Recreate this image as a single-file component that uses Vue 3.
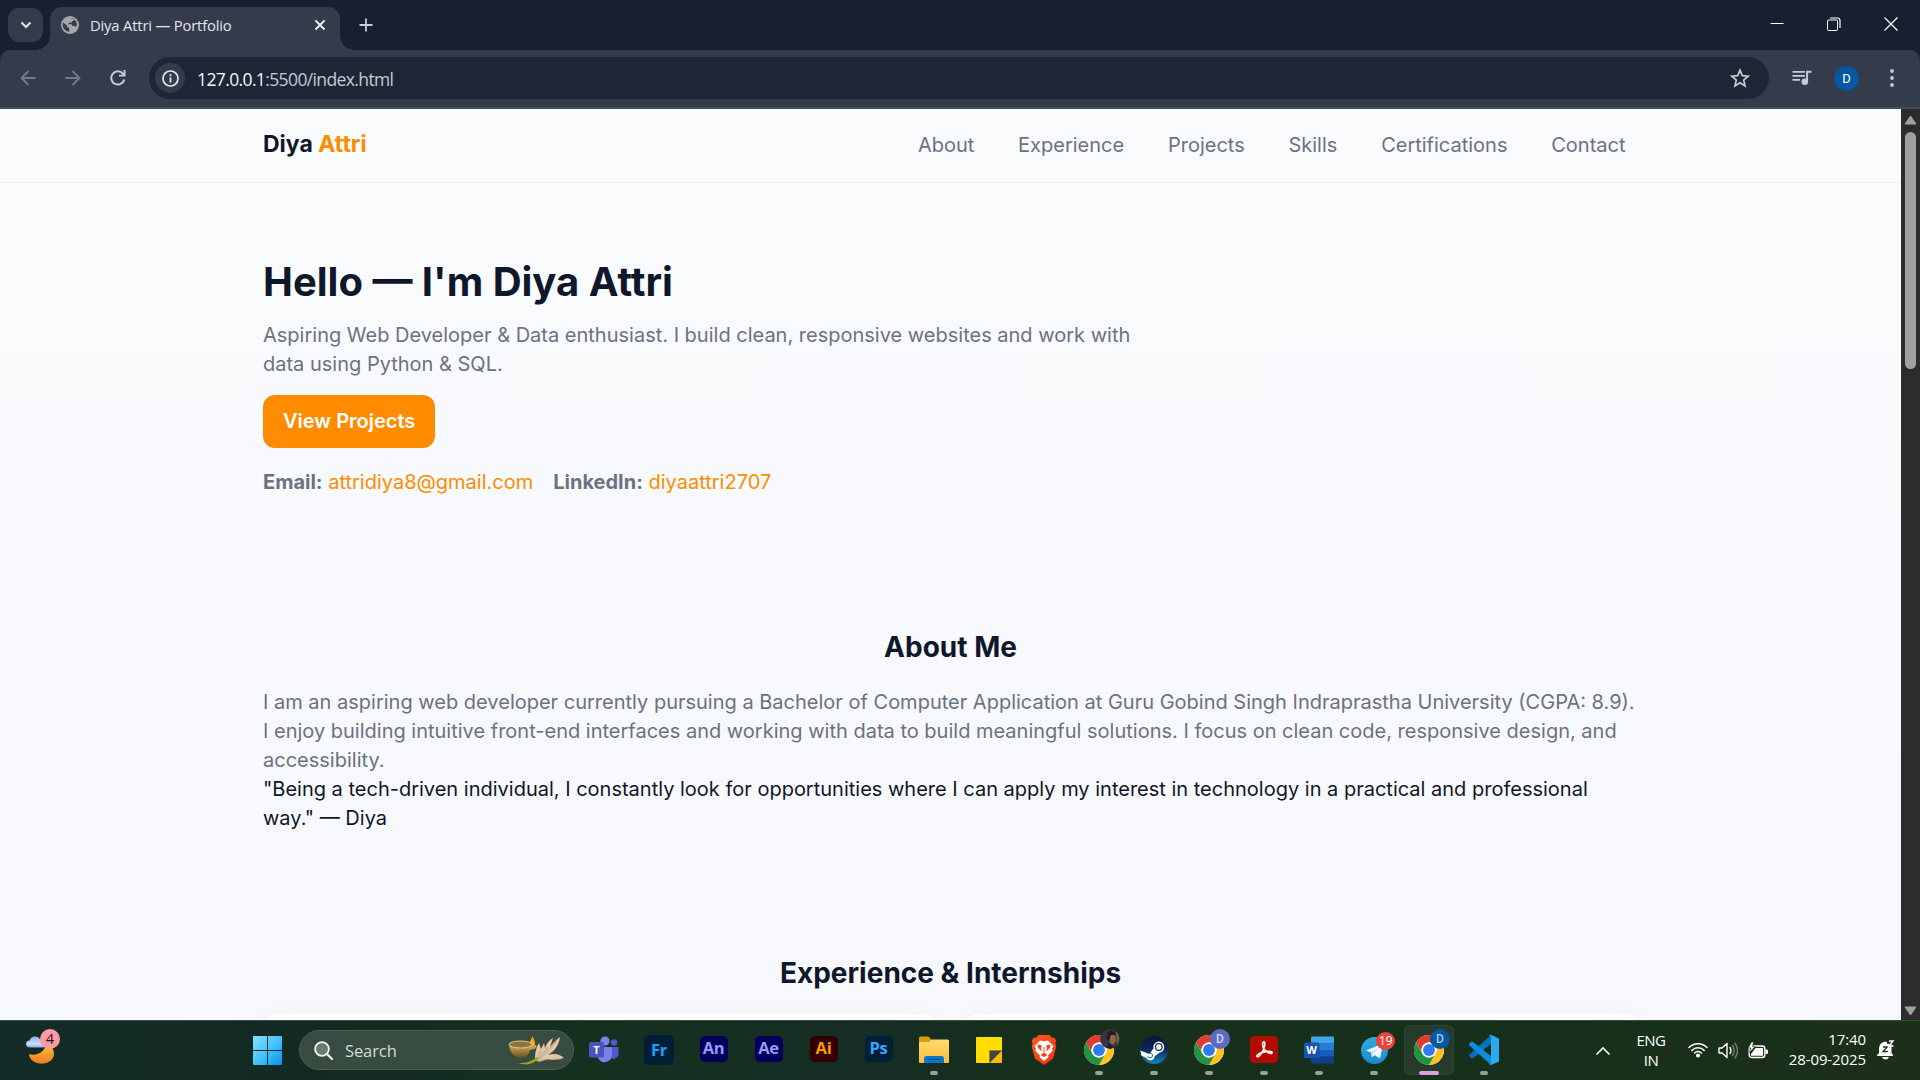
<script setup>
const nav = ['About', 'Experience', 'Projects', 'Skills', 'Certifications', 'Contact']
const adobe = [
  { t: 'Fr', bg: '#001e36', fg: '#14a4ff', big: true },
  { t: 'An', bg: '#00005b', fg: '#9999ff' },
  { t: 'Ae', bg: '#00005b', fg: '#9999ff' },
  { t: 'Ai', bg: '#330000', fg: '#ff9a00' },
  { t: 'Ps', bg: '#001e36', fg: '#31a8ff' },
]
</script>

<template>
  <div class="screen">
    <header class="tabstrip">
      <div class="tabsearch">
        <svg width="12" height="8" viewBox="0 0 12 8"><path d="M1.5 1.5 6 6l4.500-4.500" fill="none" stroke="#e3e5ea" stroke-width="2" /></svg>
      </div>
      <div class="tab">
        <svg class="globe" width="18" height="18" viewBox="0 0 18 18">
          <circle cx="9" cy="9" r="9" fill="#a4a8ad" />
          <path d="M2 6.500 6 9.500v1.200l2.200 1.200v3.800A7 7 0 0 1 2 6.500zM8.500 2.200h3.200L13 3v1.500l-2 .8-.5 1.500H8L7 8.300h3.700l1 1.700h1.700l1.500 1 .9-2A7 7 0 0 0 12 2.700L9 2z" fill="#343b4b" />
        </svg>
        <span class="tabtitle">Diya Attri — Portfolio</span>
        <svg class="close" width="12" height="12" viewBox="0 0 12 12"><path d="M1.500 1.500l9 9M10.500 1.500l-9 9" stroke="#eceef2" stroke-width="1.900" /></svg>
      </div>
      <svg class="plus" width="14" height="14" viewBox="0 0 14 14"><path d="M7 .5v13M.5 7h13" stroke="#c9cfe0" stroke-width="1.800" /></svg>
      <div class="winbtns">
        <svg width="14" height="14" viewBox="0 0 14 14"><path d="M.5 6.500h13" stroke="#fff" stroke-width="1" /></svg>
        <svg width="14" height="14" viewBox="0 0 14 14" fill="none" stroke="#fff"><rect x=".5" y="3" width="10" height="10.500" rx="1" /><path d="M3 1h7.500q2.500 0 2.500 2.500V11" stroke-width="1.200" /></svg>
        <svg width="14" height="14" viewBox="0 0 14 14"><path d="M.5 .5l13 13M13.500 .5l-13 13" stroke="#fff" stroke-width="1.200" /></svg>
      </div>
    </header>

    <div class="toolbar">
      <div class="navbtns">
        <svg width="16" height="16" viewBox="0 0 16 16" fill="none" stroke="#757c8c" stroke-width="1.800"><path d="M15.500 8H2M8.500 1 1.500 8l7 7" /></svg>
        <svg width="16" height="16" viewBox="0 0 16 16" fill="none" stroke="#757c8c" stroke-width="1.800"><path d="M.5 8H14M7.500 1l7 7-7 7" /></svg>
        <svg width="16" height="16" viewBox="0 0 16 16"><path d="M14.300 9.500A6.600 6.600 0 1 1 13 3.800L14.500 5.300" fill="none" stroke="#c3cbe2" stroke-width="2" /><path d="M15.500 0v6.500H9V4.700h4.500V0z" fill="#c3cbe2" /></svg>
      </div>
      <div class="omnibox">
        <div class="info">
          <svg width="17" height="17" viewBox="0 0 17 17"><circle cx="8.500" cy="8.500" r="7.500" fill="none" stroke="#e3e6ef" stroke-width="1.700" /><path d="M8.500 7.500v5M8.500 4.300v1.900" stroke="#e3e6ef" stroke-width="1.800" /></svg>
        </div>
        <span class="url"><b>127.0.0.1</b>:5500/index.html</span>
        <svg class="star" width="20" height="20" viewBox="0 0 20 20"><path d="M10 2.200l2.300 5.500 5.900.5-4.500 3.900 1.400 5.800-5.100-3.100-5.100 3.100 1.400-5.800L1.800 8.200l5.900-.5z" fill="none" stroke="#c9cbd2" stroke-width="1.700" /></svg>
      </div>
      <svg class="media" width="20" height="16" viewBox="0 0 20 16"><path d="M.5 1.800h12.500M.5 5.800h12.500M.5 9.800h7.500" stroke="#c3cbe2" stroke-width="1.800" /><circle cx="12.800" cy="11.700" r="3.300" fill="#c3cbe2" /><path d="M15.100 12V1.700h4.400" fill="none" stroke="#c3cbe2" stroke-width="2" /></svg>
      <div class="avatar">D</div>
      <svg class="dots" width="4" height="18" viewBox="0 0 4 18" fill="#c3cbe2"><circle cx="2" cy="2" r="1.900" /><circle cx="2" cy="9" r="1.900" /><circle cx="2" cy="16" r="1.900" /></svg>
    </div>

    <div class="view">
      <main class="page">
        <div class="sitehead">
          <div class="logo">Diya <span>Attri</span></div>
          <nav><a v-for="n in nav" :key="n">{{ n }}</a></nav>
        </div>
        <section class="hero">
          <h1>Hello — I'm Diya Attri</h1>
          <p class="lead">Aspiring Web Developer &amp; Data enthusiast. I build clean, responsive websites and work with data using Python &amp; SQL.</p>
          <a class="btn">View Projects</a>
          <div class="contacts">
            <div><b>Email:</b> <a>attridiya8@gmail.com</a></div>
            <div><b>LinkedIn:</b> <a>diyaattri2707</a></div>
          </div>
        </section>
        <section class="about">
          <h2>About Me</h2>
          <p class="muted">I am an aspiring web developer currently pursuing a Bachelor of Computer Application at Guru Gobind Singh Indraprastha University (CGPA: 8.9). I enjoy building intuitive front-end interfaces and working with data to build meaningful solutions. I focus on clean code, responsive design, and accessibility.</p>
          <p>"Being a tech-driven individual, I constantly look for opportunities where I can apply my interest in technology in a practical and professional way." — Diya</p>
        </section>
        <section class="exp">
          <h2>Experience &amp; Internships</h2>
          <div class="cards"><article></article><article></article></div>
        </section>
      </main>
      <div class="scrollbar">
        <svg width="13" height="10" viewBox="0 0 13 10"><path d="M6.500 1 12 9H1z" fill="#a0a0a0" stroke="#a0a0a0" stroke-linejoin="round" /></svg>
        <div class="thumb"></div>
        <svg class="down" width="13" height="10" viewBox="0 0 13 10"><path d="M6.500 9 12 1H1z" fill="#a0a0a0" stroke="#a0a0a0" stroke-linejoin="round" /></svg>
      </div>
    </div>

    <footer class="taskbar">
      <svg width="0" height="0" class="defs">
        <defs>
          <linearGradient id="win" x1="0" y1="0" x2="1" y2="1"><stop offset="0" stop-color="#8be0ff" /><stop offset=".5" stop-color="#45c5fb" /><stop offset="1" stop-color="#0a8ff5" /></linearGradient>
          <linearGradient id="moon" x1="0" y1="0" x2="0" y2="1"><stop offset="0" stop-color="#fcc332" /><stop offset="1" stop-color="#ee7a22" /></linearGradient>
          <linearGradient id="cloud" x1="0" y1="0" x2="0" y2="1"><stop offset="0" stop-color="#8db1ee" /><stop offset=".7" stop-color="#cfdcf8" /><stop offset="1" stop-color="#86a6e6" /></linearGradient>
          <linearGradient id="folder" x1="0" y1="0" x2="0" y2="1"><stop offset="0" stop-color="#ffdc70" /><stop offset="1" stop-color="#fdbd38" /></linearGradient>
          <linearGradient id="steam" x1="0" y1="0" x2="0" y2="1"><stop offset="0" stop-color="#141233" /><stop offset=".5" stop-color="#0d2a5c" /><stop offset="1" stop-color="#1486bf" /></linearGradient>
          <linearGradient id="brave" x1="0" y1="0" x2="1" y2="1"><stop offset="0" stop-color="#ff5a1f" /><stop offset="1" stop-color="#fb2d0a" /></linearGradient>
          <linearGradient id="tg" x1="0" y1="0" x2="0" y2="1"><stop offset="0" stop-color="#2fa9e2" /><stop offset="1" stop-color="#1a8bcb" /></linearGradient>
          <linearGradient id="bowl" x1="0" y1="0" x2="0" y2="1"><stop offset="0" stop-color="#d6b768" /><stop offset="1" stop-color="#6c4a15" /></linearGradient>
          <symbol id="chrome" viewBox="0 0 48 48">
            <circle cx="24" cy="24" r="24" fill="#fff" />
            <path d="M24 12h20.800A24 24 0 0 0 3.200 12l10.400 18A12 12 0 0 1 24 12z" fill="#e33b2e" />
            <path d="M34.400 30 24 48A24 24 0 0 0 44.800 12H24a12 12 0 0 1 10.400 18z" fill="#fcc31e" />
            <path d="M13.600 30 3.200 12A24 24 0 0 0 24 48l10.400-18a12 12 0 0 1-20.800 0z" fill="#229342" />
            <circle cx="24" cy="24" r="12" fill="#fff" /><circle cx="24" cy="24" r="9.500" fill="#2f7bee" />
          </symbol>
        </defs>
      </svg>

      <div class="weather">
        <svg width="29" height="29" viewBox="0 0 29 29"><path d="M3 19c6 2 15 0 17-10 5 1 8 5 8 9.500A12.500 10 0 0 1 3 19z" fill="url(#moon)" /><path d="M3.500 12.500a3.500 3.500 0 0 1 .3-7A5.500 5 0 0 1 14 4a4 4 0 0 1 4 8.500z" fill="url(#cloud)" /></svg>
        <span>4</span>
      </div>

      <svg class="start" width="29" height="29" viewBox="0 0 29 29" fill="url(#win)"><path d="M0 1q0-1 1-1h13v14H0zM15 0h13q1 0 1 1v13H15zM0 15h14v14H1q-1 0-1-1zM15 15h14v13q0 1-1 1H15z" /></svg>

      <div class="search">
        <svg class="mag" width="19" height="19" viewBox="0 0 19 19"><circle cx="8" cy="8" r="6.900" fill="#6a7b72" stroke="#f1f4f2" stroke-width="1.800" /><path d="M13 13l5 5" stroke="#f1f4f2" stroke-width="2.300" stroke-linecap="round" /></svg>
        <span>Search</span>
        <svg class="diya" width="56" height="32" viewBox="0 0 56 32">
          <path d="M22 13c-3-4 2-6 2-11 3 4 4 8 2 11z" fill="#ffa50c" />
          <path d="M1 10h24l4 2-2 3-5 1c-1 5-5 8-9 8C6 24 1 17 1 10z" fill="url(#bowl)" />
          <ellipse cx="12.500" cy="10.500" rx="11.500" ry="3.500" fill="#92713a" stroke="#e0cb8b" />
          <path d="M27 25c0-8 2-13 4-16l2 6 3-6 1 5c2-5 4-8 8-10l-3 9c3-4 6-7 10-10-1 7-4 12-8 15l-4 3c6-2 12-1 16 3-4 1-8 2-12 2l-4-1-6 2c-3 1-5 1-7-2z" fill="#dfc7a8" />
          <path d="M28 26l5-9M29 27l11-14M30 27l19-20M33 26l20-1" stroke="#b18a6a" stroke-width=".7" />
          <path d="M10 29c8 0 13-1 19-6l2 1c-5 6-12 8-21 5z" fill="#98a522" />
        </svg>
      </div>

      <div class="apps">
        <div class="app">
          <svg width="30" height="28" viewBox="0 0 30 28"><circle cx="25" cy="6.500" r="3.200" fill="#5059c9" /><path d="M20 11h9.500v7a5 5 0 0 1-7 4.500z" fill="#5059c9" /><circle cx="16" cy="5" r="4.600" fill="#7b83eb" /><path d="M9 11h14v8a7.500 8 0 0 1-14 3z" fill="#7b83eb" /><rect y="6" width="15" height="15.500" rx="1.500" fill="#4b53bc" /></svg>
          <em class="tlet">T</em>
        </div>
        <div v-for="a in adobe" :key="a.t" class="app">
          <div class="adobe" :class="{ big: a.big }" :style="{ background: a.bg, color: a.fg }">{{ a.t }}</div>
        </div>
        <div class="app run">
          <svg width="30" height="28" viewBox="0 0 30 28"><path d="M0 2q0-1.500 1.500-1.500h8L12.500 4v5H0z" fill="#dc9a08" /><path d="M0 6h10l2.500-2.500H28.500Q30 3.500 30 5v21q0 1-1 1H1q-1 0-1-1z" fill="url(#folder)" /><path d="M5 27v-4.500Q5 20 7.500 20h15q2.500 0 2.500 2.500V27z" fill="#0878cf" /><path d="M8 23.300h13.500" stroke="#074a8c" stroke-width="1.200" /></svg>
        </div>
        <div class="app">
          <svg width="26" height="26" viewBox="0 0 26 26"><path d="M0 1q0-1 1-1h24q1 0 1 1v13L14 26H1q-1 0-1-1z" fill="#ffdf00" /><path d="M13 13h13v12q0 1-1 1H13z" fill="#f7b90a" /><path d="M13.500 13.500H26L13.500 26z" fill="#434343" /></svg>
        </div>
        <div class="app">
          <svg width="26" height="30" viewBox="0 0 26 30"><path d="M7.500 0h11L21 2.800l2-.3 2.300 3.300-.9 2.400.9 3-3.200 12.300L13 30l-9.100-6.500L.7 11.200l.9-3-.9-2.400L3 2.500l2 .3z" fill="url(#brave)" /><path d="M9 5.500l4 .8 4-.8 5.500 5.800-1.500 2.500.7 2-4.700 4.700.5 1.700L13 26l-4.500-3.800.5-1.700-4.700-4.700.7-2-1.500-2.500z" fill="#fff" /><path d="M6.500 9.500l4.500 1-1 3 1 3-4-3.500zM19.500 9.500l-4.500 1 1 3-1 3 4-3.500zM9.500 20l3.500-2.500 3.500 2.500-3.500 2z" fill="#fb3f18" /><path d="M13 12v5" stroke="#fb3f18" /></svg>
        </div>
        <div class="app run">
          <svg width="30" height="30"><use href="#chrome" /></svg>
          <svg class="badge face" width="20" height="20" viewBox="0 0 20 20"><circle cx="10" cy="10" r="10" fill="#343646" /><path d="M9 4q4-2 6 2l1 6-3 4-3-2-1-5z" fill="#946248" /><path d="M8 3q5-4 8 3l-5 0-2 6-3-3zM6 19l3-5 3 3 2-1-2 4z" fill="#241c20" /><path d="M16 2q6 6 1 14z" fill="#79634c" /></svg>
        </div>
        <div class="app run">
          <svg width="28" height="28" viewBox="0 0 28 28"><circle cx="14" cy="14" r="14" fill="url(#steam)" /><path d="M.3 14.500l9 3.500 4.200-5.500a5.500 5.500 0 1 1 6.300 4L14.500 20.500a4.200 4.200 0 0 1-8 1.500l-5-2.200z" fill="#fff" /><circle cx="18.800" cy="11" r="3.300" fill="#fff" stroke="#123568" stroke-width="1.300" /><path d="M7.500 20.800l2 .8a2.300 2.300 0 0 0 1.800-4.200l-1.500-.6" fill="none" stroke="#174b82" /></svg>
        </div>
        <div class="app run">
          <svg width="30" height="30"><use href="#chrome" /></svg>
          <span class="badge violet">D</span>
        </div>
        <div class="app run">
          <svg class="pdf" width="28" height="27" viewBox="0 0 28 27"><rect width="28" height="27" rx="4.500" fill="#b30b00" /><path d="M13 6.500c1.600-2 2.400 1 1.200 5C12.800 16 9.500 21 7.500 20.800c-2.300-.6 1.500-4.300 8-5.200 4.500-.6 7 .2 6.500 1.400-1 1.500-5.500-.8-7.500-3.500-1.700-2.500-2.200-5.800-1.500-7z" fill="none" stroke="#fff" stroke-width="1.600" /></svg>
        </div>
        <div class="app run">
          <svg width="30" height="28" viewBox="0 0 30 28"><path d="M7 1.500Q7 .5 8 .5h21q1 0 1 1v6H7z" fill="#41a5ee" /><path d="M7 7.300h23V14H7z" fill="#2b7cd3" /><path d="M7 14h23v6.700H7z" fill="#185abd" /><path d="M7 20.700h23v5.800q0 1-1 1H8q-1 0-1-1z" fill="#103f91" /><rect y="6.500" width="15.500" height="15.500" rx="1.500" fill="#1853b5" /></svg>
          <em class="wlet">W</em>
        </div>
        <div class="app run">
          <svg class="tele" width="27" height="27" viewBox="0 0 27 27"><circle cx="13.500" cy="13.500" r="13.500" fill="url(#tg)" /><path d="M5 13.500 20.500 7.300q1.400-.5 1.200 1L19.300 20q-.4 1.500-1.700.8l-3.900-2.900-2 1.900q-.8.700-1-.6l-.7-4z" fill="#fff" /><path d="M10 15.200l8.500-5.300-6.700 6.500-.3 2.800z" fill="#b9d8ec" /></svg>
          <span class="badge red">19</span>
        </div>
        <div class="app run active">
          <svg width="30" height="30"><use href="#chrome" /></svg>
          <span class="badge blue">D</span>
        </div>
        <div class="app run">
          <svg width="30" height="30" viewBox="0 0 30 30"><path d="M22 0v9L4 23q-1 .8-2 0l-1.500-1.500q-1-1 0-2z" fill="#0073bd" /><path d="M22 30v-9L4 7q-1-.8-2 0L.5 8.500q-1 1 0 2z" fill="#0d8ddb" /><path d="M22 0l7 3q1 .5 1 1.500v21q0 1-1 1.500l-7 3q-1 .2-2-.8 2 .5 2-1.500V2.500q0-2-2-1.500 1-1.200 2-1z" fill="#2ba9f4" /></svg>
        </div>
      </div>

      <div class="tray">
        <svg class="chev" width="14" height="9" viewBox="0 0 14 9"><path d="M1 8l6-6 6 6" fill="none" stroke="#fff" stroke-width="1.700" stroke-linecap="round" /></svg>
        <div class="lang"><span>ENG</span><span>IN</span></div>
        <svg class="wifi" width="20" height="16" viewBox="0 0 20 16" fill="none" stroke="#fff" stroke-width="1.500" stroke-linecap="round"><path d="M1 5.500a12.500 12.500 0 0 1 18 0M3.800 8.400a8.600 8.600 0 0 1 12.400 0M6.600 11a4.800 4.800 0 0 1 6.800 0" /><circle cx="10" cy="13.500" r="1.300" fill="#fff" /></svg>
        <svg class="vol" width="20" height="17" viewBox="0 0 20 17" fill="none" stroke="#fff" stroke-width="1.400" stroke-linecap="round" stroke-linejoin="round"><path d="M1 6h3l5-4.500v14L4 11H1zM12 5.500q2 3 0 6" /><path d="M14.500 3.500q3.500 5 0 10M17 1.200q5 7.300 0 14.600" stroke="#6f8070" /></svg>
        <svg class="bat" width="20" height="17" viewBox="0 0 20 17"><rect x="1.200" y="4" width="15.600" height="11.500" rx="2.500" fill="#1c2f19" stroke="#fff" stroke-width="1.400" /><path d="M3 13.800V12l4.500-6H15v7.800zM17.500 7.500h1q1.500 0 1.500 1.200v2q0 1.300-1.500 1.300h-1z" fill="#fff" /><path d="M3.500 0 .3 6h2.500L1.500 10.500 7 4.500H4.500L5.500 0z" fill="#fff" stroke="#1c2f19" stroke-width=".6" /></svg>
        <div class="clock"><span>17:40</span><span>28-09-2025</span></div>
        <svg class="bell" width="18" height="20" viewBox="0 0 18 20"><path d="M2 13V8a6.500 6.500 0 0 1 8-6v2h4.500v9l1.500 2v1H0v-1zM5 17h7q-1 2.500-3.500 2.500T5 17z" fill="#fff" /><path d="M6 7h4.200L6 11.500h4.800" fill="none" stroke="#1c2f19" stroke-width="1.300" /><path d="M12 1h4l-4 5h4.500" fill="none" stroke="#fff" stroke-width="1.400" /></svg>
      </div>
    </footer>
  </div>
</template>

<style>
body { margin: 0; overflow: hidden; }
</style>

<style scoped>
* { box-sizing: border-box; }
svg { display: block; flex: none; }
.screen { width: 1920px; height: 1080px; display: flex; flex-direction: column; overflow: hidden; font-family: "Open Sans", "Noto Sans", sans-serif; background: #182030; }

.tabstrip { height: 50px; flex: none; display: flex; align-items: flex-start; background: #182030; }
.tabsearch { width: 35px; height: 34px; margin: 8px 7px 0 8px; border-radius: 11px; background: #343b4b; display: flex; align-items: center; justify-content: center; }
.tab { position: relative; width: 290px; height: 43px; margin-top: 7px; border-radius: 12px 12px 0 0; background: #343b4b; display: flex; align-items: center; padding: 0 14px 7px 11px; }
.tab::before, .tab::after { content: ""; position: absolute; bottom: 0; width: 14px; height: 14px; }
.tab::before { left: -14px; background: radial-gradient(circle at 0 0, transparent 13.500px, #343b4b 14px); }
.tab::after { right: -14px; background: radial-gradient(circle at 100% 0, transparent 13.500px, #343b4b 14px); }
.tabtitle { margin-left: 11px; font-size: 14.800px; letter-spacing: -0.180px; color: #e3e5e9; white-space: nowrap; }
.close { margin-left: auto; }
.plus { margin: 18px 0 0 19px; }
.winbtns { margin: 17px 22px 0 auto; display: flex; gap: 43px; }

.toolbar { height: 59px; flex: none; display: flex; align-items: center; background: #343b4b; border-bottom: 2px solid #474c57; padding: 0 0 1px; border-radius: 10px 10px 0 0; }
.navbtns { display: flex; gap: 29px; margin-left: 20px; }
.omnibox { width: 1620px; height: 42px; margin-left: 23px; border-radius: 21px; background: #1e2636; display: flex; align-items: center; padding: 0 19px 0 6px; }
.info { width: 30px; height: 30px; border-radius: 50%; background: #343b4b; display: flex; align-items: center; justify-content: center; }
.url { margin-left: 12px; padding-top: 1px; font-size: 17.500px; letter-spacing: -0.620px; color: #c6cad3; }
.url b { font-weight: 400; color: #f4f5f7; }
.star { margin-left: auto; }
.media { margin-left: 23px; }
.avatar { width: 25px; height: 25px; margin-left: 22px; border-radius: 50%; background: #0558a0; color: #fff; font: 400 13px/25px Roboto, sans-serif; text-align: center; }
.dots { margin-left: 31px; }

.view { height: 911px; flex: none; display: flex; overflow: hidden; background: #fafbfd; }
.page { width: 1901px; height: 911px; overflow: hidden; background: linear-gradient(180deg, #fafbfd, #f7f8fc); color: #0f172a; font-family: Inter, sans-serif; font-size: 20px; line-height: 29px; }
.sitehead { height: 74px; padding: 0 263px; border-bottom: 1px solid #eeeff2; display: flex; align-items: center; justify-content: space-between; }
.logo { font-weight: 700; font-size: 23px; padding-bottom: 2px; }
.logo span { color: #ff8c00; }
nav { display: flex; gap: 18.750px; color: #6b7280; }
nav a { padding: 0 12.500px; }
.hero { height: 392px; padding: 74px 263px 0; display: flex; flex-direction: column; align-items: flex-start; }
h1 { margin: 0; font-size: 40px; line-height: 49px; font-weight: 700; }
.lead { margin: 15px 0 0; width: 900px; color: #6b7280; }
.btn { height: 53px; margin-top: 16px; padding: 0 20px; border-radius: 12px; background: #ff8c00; color: #fff; font-weight: 600; line-height: 52px; }
.contacts { margin-top: 20px; display: flex; gap: 20px; color: #6b7280; }
.contacts b { font-weight: 700; }
.contacts a { color: #ff8c00; }
.about { height: 326px; padding: 52px 263px 0; }
h2 { margin: 0; font-size: 28px; line-height: 40px; font-weight: 700; text-align: center; }
p { margin: 0; }
.about h2 { margin-bottom: 21px; }
.muted { color: #6b7280; }
.exp { padding: 52px 263px 0; }
.cards { margin-top: 21px; display: grid; grid-template-columns: 1fr 1fr; gap: 25px; }
article { height: 200px; border-radius: 15px; background: #fff; box-shadow: 0 8px 30px rgba(15, 23, 42, 0.05); }

.scrollbar { width: 19px; height: 911px; background: #2c2c2c; display: flex; flex-direction: column; align-items: center; padding: 6px 0 4px; }
.thumb { width: 11px; height: 237px; margin-top: 7px; border-radius: 6px; background: #9f9f9f; }
.down { margin-top: auto; }

.taskbar { position: relative; height: 60px; flex: none; display: flex; align-items: center; padding-bottom: 1px; color: #fff; border-top: 1px solid #3b4d43; background: linear-gradient(90deg, #142c27 0, #132a24 16%, #15301f 30%, #152d25 45%, #17301b 55%, #16301b 75%, #1c2f19 100%); }
.defs { position: absolute; }
.weather { position: relative; width: 34px; height: 34px; margin-left: 26px; padding-top: 2px; }
.weather span { position: absolute; left: 14px; top: -4px; width: 20px; height: 20px; border-radius: 50%; background: #ff99a4; color: #151515; font-size: 14.500px; line-height: 20px; text-align: center; }
.start { margin-left: 193px; }
.search { width: 275px; height: 40px; margin-left: 17px; border-radius: 20px; background: #374b41; border: 1px solid #4c5f55; display: flex; align-items: center; padding: 0 9px 0 14px; font-size: 16.500px; color: #d5dcd8; }
.search span { margin-left: 12px; letter-spacing: -0.100px; }
.diya { margin-left: auto; }
.apps { display: flex; margin-left: 5px; gap: 5px; }
.app { position: relative; width: 50px; height: 50px; display: flex; align-items: center; justify-content: center; }
.run::after { content: ""; position: absolute; left: 21px; bottom: 0; width: 8px; height: 4px; border-radius: 2px; background: #96a199; }
.active { background: #263b2a; border-radius: 6px; box-shadow: inset 0 0 0 1px #304534; }
.active::after { left: 15px; width: 20px; background: #d9a0e2; }
.adobe { width: 28px; height: 26px; margin: 0 1px 2px 0; border-radius: 5px; font: 700 16.500px/24px "Open Sans", sans-serif; text-align: center; letter-spacing: -0.300px; }
.adobe.big { width: 30px; height: 30px; margin: 0; line-height: 29px; }
.pdf { margin-bottom: 2px; }
.tlet, .wlet { position: absolute; left: 10px; top: 17px; width: 15px; font: 700 11px/15px "Open Sans", sans-serif; text-align: center; }
.badge { position: absolute; left: 26px; top: 4px; width: 20px; height: 20px; border-radius: 50%; font: 500 12px/20px Roboto, sans-serif; text-align: center; }
.violet { background: #5c6bc0; color: #d3d9f5; }
.blue { background: #0558a0; color: #a9cdf0; }
.red { left: 27px; top: 7px; width: 19px; height: 18px; background: #f0403a; color: #fff; font: 12.500px/18px "Open Sans", sans-serif; letter-spacing: -0.500px; }
.tray { margin-left: auto; display: flex; align-items: center; font-size: 15px; line-height: 20px; }
.lang { margin-left: 25px; width: 32px; display: flex; flex-direction: column; align-items: center; letter-spacing: -0.500px; }
.wifi { margin-left: 21px; }
.vol { margin-left: 10px; }
.bat { margin-left: 10px; }
.clock { margin: 0 0 2px 19px; width: 79px; display: flex; flex-direction: column; align-items: flex-end; letter-spacing: -0.100px; white-space: nowrap; }
.bell { margin: 0 25px 0 11px; }
</style>
